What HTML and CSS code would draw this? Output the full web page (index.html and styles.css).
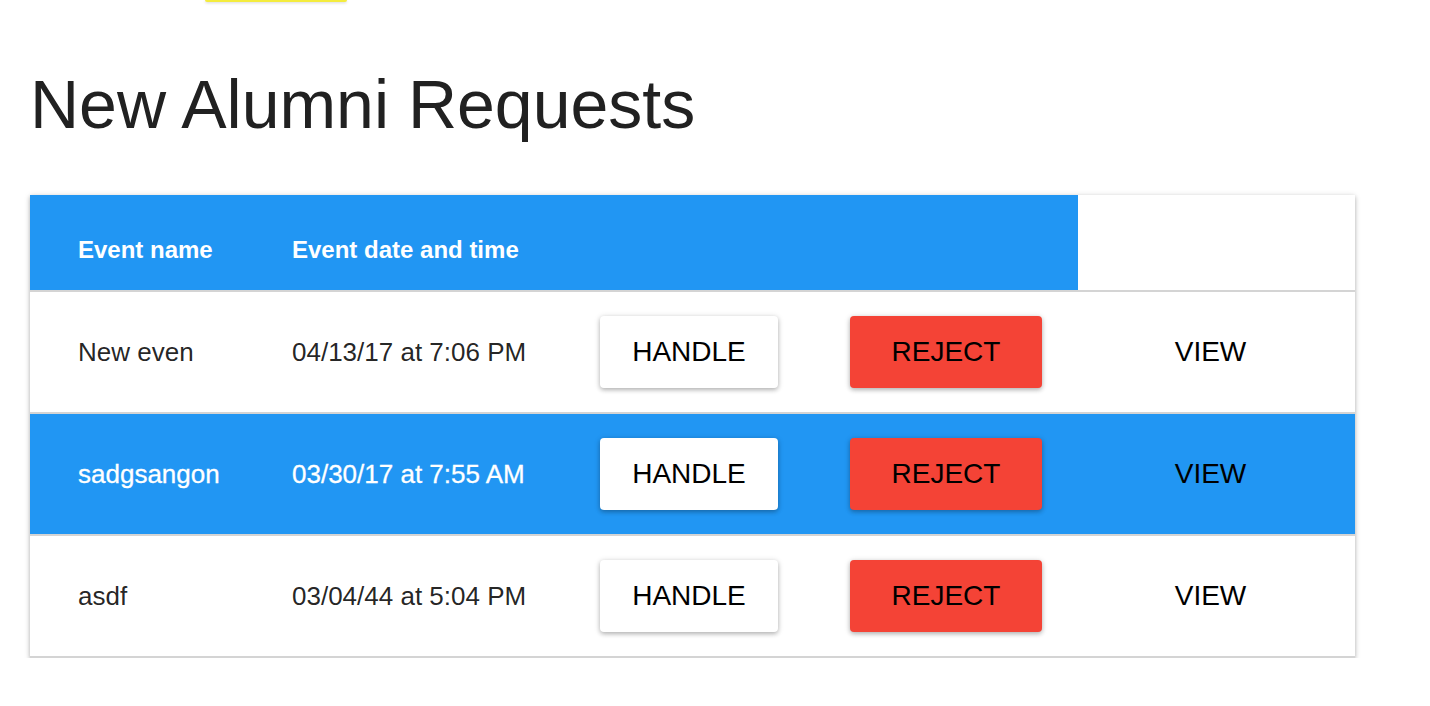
FILE: index.html
```html
<!DOCTYPE html>
<html lang="en">
<head>
<meta charset="utf-8">
<title>New Alumni Requests</title>
<link rel="stylesheet" href="styles.css">
</head>
<body>
<div class="page">
  <div class="topbar"><div class="yellow-btn"></div></div>
  <h1 class="title">New Alumni Requests</h1>
  <div class="card">
    <div class="row head">
      <div class="cell th">Event name</div>
      <div class="cell th">Event date and time</div>
      <div class="cell th"></div>
      <div class="cell th"></div>
      <div class="cell"></div>
    </div>
    <div class="row">
      <div class="cell text">New even</div>
      <div class="cell text">04/13/17 at 7:06 PM</div>
      <div class="cell"><button class="btn btn-white">HANDLE</button></div>
      <div class="cell cell-reject"><button class="btn btn-red">REJECT</button></div>
      <div class="cell cell-view"><button class="btn-flat">VIEW</button></div>
    </div>
    <div class="row selected">
      <div class="cell text">sadgsangon</div>
      <div class="cell text">03/30/17 at 7:55 AM</div>
      <div class="cell"><button class="btn btn-white">HANDLE</button></div>
      <div class="cell cell-reject"><button class="btn btn-red">REJECT</button></div>
      <div class="cell cell-view"><button class="btn-flat">VIEW</button></div>
    </div>
    <div class="row">
      <div class="cell text">asdf</div>
      <div class="cell text">03/04/44 at 5:04 PM</div>
      <div class="cell"><button class="btn btn-white">HANDLE</button></div>
      <div class="cell cell-reject"><button class="btn btn-red">REJECT</button></div>
      <div class="cell cell-view"><button class="btn-flat">VIEW</button></div>
    </div>
  </div>
</div>
</body>
</html>
```
FILE: styles.css
```css
html, body {
  margin: 0;
  padding: 0;
  background: #ffffff;
}

body {
  font-family: "Liberation Sans", Arial, Helvetica, sans-serif;
  color: rgba(0, 0, 0, 0.87);
}

.page {
  padding: 0 0 0 30px;
}

.topbar {
  height: 3px;
  padding-left: 175px;
}

.yellow-btn {
  width: 142px;
  height: 2px;
  background: #f4ec3e;
  border-radius: 0 0 4px 4px;
  box-shadow: 0 1px 3px rgba(0, 0, 0, 0.18);
}

.title {
  margin: 67px 0 0 0;
  font-size: 68px;
  line-height: 68px;
  font-weight: 400;
  color: #212121;
  height: 68px;
}

.card {
  margin-top: 57px;
  width: 1325px;
  background: #ffffff;
  box-shadow: 0 1px 6px rgba(0, 0, 0, 0.16), 0 2px 4px rgba(0, 0, 0, 0.2);
  display: flex;
  flex-direction: column;
}

.row {
  display: grid;
  grid-template-columns: 214px 308px 274px 252px 1fr;
  height: 120px;
  border-bottom: 2px solid #d4d4d4;
  font-size: 26px;
}

.row.head {
  height: 95px;
  font-size: 24px;
  font-weight: 700;
  color: #ffffff;
}

.cell {
  display: flex;
  align-items: center;
  padding-left: 48px;
  white-space: nowrap;
}

.th {
  background: #2196f3;
  padding-top: 14px;
}

.row.selected {
  background: #2196f3;
  color: #ffffff;
}

.row.selected .text {
  -webkit-text-stroke: 0.3px #ffffff;
}

.cell-reject {
  padding-left: 24px;
}

.cell-view {
  padding-left: 0;
  padding-right: 12px;
  justify-content: center;
}

.btn {
  font-family: "Liberation Sans", Arial, Helvetica, sans-serif;
  font-size: 28px;
  color: #000000;
  height: 72px;
  border: none;
  border-radius: 4px;
  padding: 0 32px;
  box-shadow: 0 1px 6px rgba(0, 0, 0, 0.16), 0 2px 4px rgba(0, 0, 0, 0.2);
  cursor: pointer;
}

.btn-white {
  width: 178px;
  background: #ffffff;
}

.btn-red {
  width: 192px;
  background: #f44336;
}

.btn-flat {
  font-family: "Liberation Sans", Arial, Helvetica, sans-serif;
  font-size: 28px;
  color: #000000;
  background: transparent;
  border: none;
  padding: 0;
  height: 72px;
  cursor: pointer;
}
```
